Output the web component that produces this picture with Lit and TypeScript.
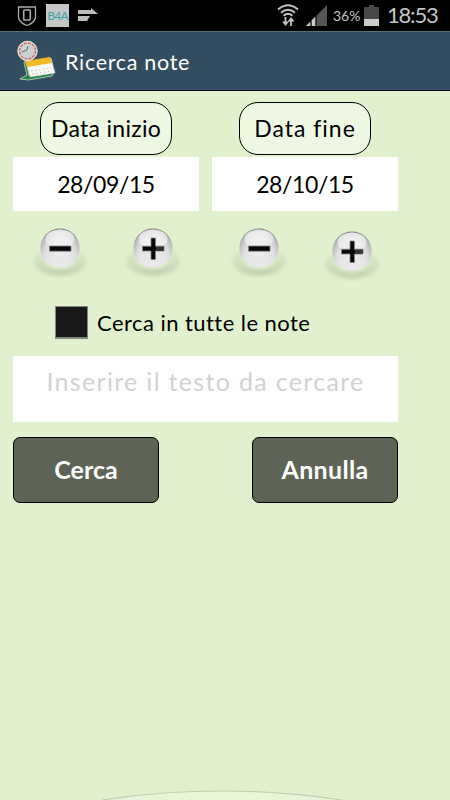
import { LitElement, html, css, svg } from "lit";
import { customElement, property } from "lit/decorators.js";

@customElement("glossy-button")
class GlossyButton extends LitElement {
  @property() kind = "minus";
  static styles = css`
    :host { display: block; width: 60px; height: 64px; }
    svg { display: block; overflow: visible; }
  `;
  render() {
    return html`<svg width="60" height="64" viewBox="0 0 60 64">
      <defs>
        <radialGradient id="shade"><stop offset="0" stop-color="#b3c39f"/><stop offset=".55" stop-color="#bdcbaa" stop-opacity=".9"/><stop offset=".8" stop-color="#cbdab7" stop-opacity=".6"/><stop offset="1" stop-color="#e1f0cd" stop-opacity="0"/></radialGradient>
        <radialGradient id="glow"><stop offset="0" stop-color="#f1ffe3"/><stop offset=".6" stop-color="#e8f8d9" stop-opacity=".8"/><stop offset="1" stop-color="#e1f0cd" stop-opacity="0"/></radialGradient>
        <radialGradient id="ball" cx=".5" cy=".6" r=".61"><stop offset="0" stop-color="#ececec"/><stop offset=".6" stop-color="#dcdcdc"/><stop offset=".84" stop-color="#bbb"/><stop offset="1" stop-color="#777"/></radialGradient>
        <linearGradient id="shine" x2="0" y2="1"><stop offset="0" stop-color="#fff" stop-opacity=".75"/><stop offset="1" stop-color="#fff" stop-opacity=".35"/></linearGradient>
        <linearGradient id="low" x2="0" y2="1"><stop offset=".5" stop-color="#eee" stop-opacity="0"/><stop offset=".9" stop-color="#eaeaea" stop-opacity=".9"/></linearGradient>
      </defs>
      <ellipse cx="30" cy="38" rx="31" ry="18" fill="url(#shade)"/>
      <ellipse cx="30" cy="34" rx="25" ry="15" fill="url(#glow)"/>
      <circle cx="30" cy="24" r="19.6" fill="url(#ball)"/>
      <circle cx="30" cy="24" r="19.6" fill="url(#low)"/>
      <ellipse cx="30" cy="15" rx="14.500" ry="9.500" fill="url(#shine)"/>
      ${this.kind === "plus"
        ? svg`<path d="M28 14h4.500v8.200h8.500v4.800h-8.500v8.500H28V27h-8.500v-4.800H28z" fill="#080808" stroke="#858585" stroke-width=".8"/><path d="M33 23h7v3h-7z" fill="#333"/>`
        : svg`<path d="M19.500 22h21.500v5.200H19.500z" fill="#080808" stroke="#858585" stroke-width=".8"/>`}
    </svg>`;
  }
}

@customElement("app-root")
class AppRoot extends LitElement {
  static styles = css`
    * { box-sizing: border-box; }
    :host { display: flex; flex-direction: column; position: relative; width: 450px; height: 800px; overflow: hidden; background: #e1f0cd; font-family: Lato, "Open Sans", sans-serif; color: #000; }
    svg { display: block; flex: none; }
    .status { height: 31px; background: #000; flex: none; display: flex; align-items: center; color: #c4c4c4; padding-left: 17px; }
    .b4a { width: 23px; height: 23px; background: #c5c7c7; color: #3ca3a5; font-size: 12px; line-height: 23px; text-align: center; margin-left: 9px; letter-spacing: -.8px; margin-top: -1px; }
    .flag { margin-left: 9px; margin-top: -2px; }
    .wifi { margin-left: auto; }
    .signal { margin-left: 7px; }
    .pct { font-size: 14px; margin-left: 6px; width: 28px; white-space: nowrap; }
    .batt { margin-left: 3px; }
    .clock { font-size: 22px; width: 63px; margin-left: 8px; white-space: nowrap; letter-spacing: -1.2px; margin-top: -2px; }
    .title { height: 60px; flex: none; background: #324d60; border-top: 1px solid #5b6e78; border-bottom: 1px solid #000022; display: flex; align-items: center; padding-left: 16px; color: #fff; }
    .title span { font-size: 21.500px; letter-spacing: .7px; margin-left: 8px; margin-top: 1px; white-space: nowrap; }
    .form { padding: 11px 52px 0 13px; }
    .dates { display: grid; grid-template-columns: 186px 186px; column-gap: 13px; }
    .pill { width: 132px; height: 53px; margin-left: 27px; border: 1px solid #000; border-radius: 19px; background: #edf7e2; font-size: 23px; line-height: 51px; text-align: center; white-space: nowrap; }
    .inizio { letter-spacing: .3px; }
    .fine { letter-spacing: 1px; }
    .date { height: 54px; margin-top: 2px; background: #fff; font-size: 23px; line-height: 54px; text-align: center; letter-spacing: -.4px; }
    .steps { display: flex; gap: 33px; padding: 13px 0 0 17px; }
    .drop { margin-top: 3px; }
    .check { display: flex; align-items: center; margin: 15px 0 0 42px; height: 33px; }
    .box { width: 33px; height: 33px; background: #17181a; border: 1px solid #85877f; border-bottom-width: 2px; flex: none; }
    .check span { margin-left: 9px; font-size: 22px; letter-spacing: .45px; white-space: nowrap; }
    .search { height: 66px; margin-top: 17px; background: #fff; color: #d2d2d2; text-align: center; font-size: 25px; line-height: 51px; letter-spacing: 1.32px; white-space: nowrap; }
    .actions { display: flex; justify-content: space-between; margin-top: 15px; }
    .action { width: 146px; height: 66px; border: 1px solid #000; border-radius: 7px; background: #5e6455; color: #fff; font-size: 25px; line-height: 63px; text-align: center; font-weight: 700; }
    .annulla { letter-spacing: .3px; }
    .arc { position: absolute; bottom: 0; left: 72px; }
  `;
  render() {
    return html`
      <div class="status">
        <svg width="20" height="22" viewBox="0 0 20 22" fill="none" stroke="#aaa"><path d="M1.500 2h17v11Q17 18 10 20.500 3 18 1.500 13z" stroke-width="1.300"/><rect x="6.700" y="5" width="6.600" height="10" rx="1" stroke-width="1.600"/></svg>
        <div class="b4a">B4A</div>
        <svg class="flag" width="20" height="14" viewBox="0 0 20 14" fill="#bcbcbc"><path d="M0 2h13V0l7 6H0zM0 8h12l-3 5H0z"/></svg>
        <svg class="wifi" width="22" height="23" viewBox="0 0 22 23" fill="none" stroke="#c4c4c4" stroke-width="1.900"><path d="M1 5.500q10-8.500 20 0M4 8.700q7-5.700 14 0M6.500 11.700q4.500-3.700 9 0"/><path d="M8.500 13v7M14 22v-7" stroke-width="1.800"/><path d="M5 17.500h7L8.500 22zM10.500 17.500h7L14 13z" fill="#c4c4c4" stroke="none"/></svg>
        <svg class="signal" width="21" height="21" viewBox="0 0 21 21"><path d="M0 21 21 0v21z" fill="#555"/><path d="M0 21 4.500 16.500V21zM5.500 21v-5.500l4-4V21z" fill="#ccc"/><path d="M10 11v10M5 16v5" stroke="#000"/></svg>
        <div class="pct">36%</div>
        <svg class="batt" width="15" height="21" viewBox="0 0 15 21"><path d="M5 0h5v2h5v19H0V2h5z" fill="#484848"/><path d="M0 14h15v7H0z" fill="#ccc"/></svg>
        <div class="clock">18:53</div>
      </div>
      <div class="title">
        <svg width="41" height="42" viewBox="0 0 41 42">
          <path d="M10 20 13 35 38 31 36 36 12 40 4 39 11 35 8 23z" fill="#218444" stroke="#dfeee1" stroke-width=".7"/>
          <path d="M10 22 35 18l4 15-25 4z" fill="#f7f7f5" stroke="#c7c9bd" stroke-width=".6"/>
          <path d="M9 21 34 17l2 6-25 4z" fill="#f0bb22"/>
          <path d="M15 31l20-3M16 34l19-3" stroke="#bfc4cb" stroke-width="1" stroke-dasharray="1.500 2.500"/>
          <path d="m15 20 2-3m4 2 2-3m4 2 2-3m3 2 2-2" stroke="#5e572e" stroke-width="1.200"/>
          <circle cx="11.500" cy="11" r="9.700" fill="#d8dada" stroke="#eeeae8"/>
          <circle cx="11.500" cy="11" r="8" fill="#cdd1d2" stroke="#d56862" stroke-width="1.500" stroke-dasharray="3 1.200"/>
          <path d="m6 12 5-2 1-4" stroke="#59686b" fill="none"/>
        </svg>
        <span>Ricerca note</span>
      </div>
      <div class="form">
        <div class="dates">
          <div>
            <div class="pill inizio">Data inizio</div>
            <div class="date">28/09/15</div>
            <div class="steps"><glossy-button></glossy-button><glossy-button kind="plus"></glossy-button></div>
          </div>
          <div>
            <div class="pill fine">Data fine</div>
            <div class="date">28/10/15</div>
            <div class="steps"><glossy-button></glossy-button><glossy-button class="drop" kind="plus"></glossy-button></div>
          </div>
        </div>
        <div class="check"><div class="box"></div><span>Cerca in tutte le note</span></div>
        <div class="search">Inserire il testo da cercare</div>
        <div class="actions"><div class="action">Cerca</div><div class="action annulla">Annulla</div></div>
      </div>
      <svg class="arc" width="300" height="11" viewBox="0 0 300 11"><path d="M30 11Q150-7 270 11" fill="#e9f5d9" stroke="#c1ceb1" stroke-width="1.200"/></svg>
    `;
  }
}
